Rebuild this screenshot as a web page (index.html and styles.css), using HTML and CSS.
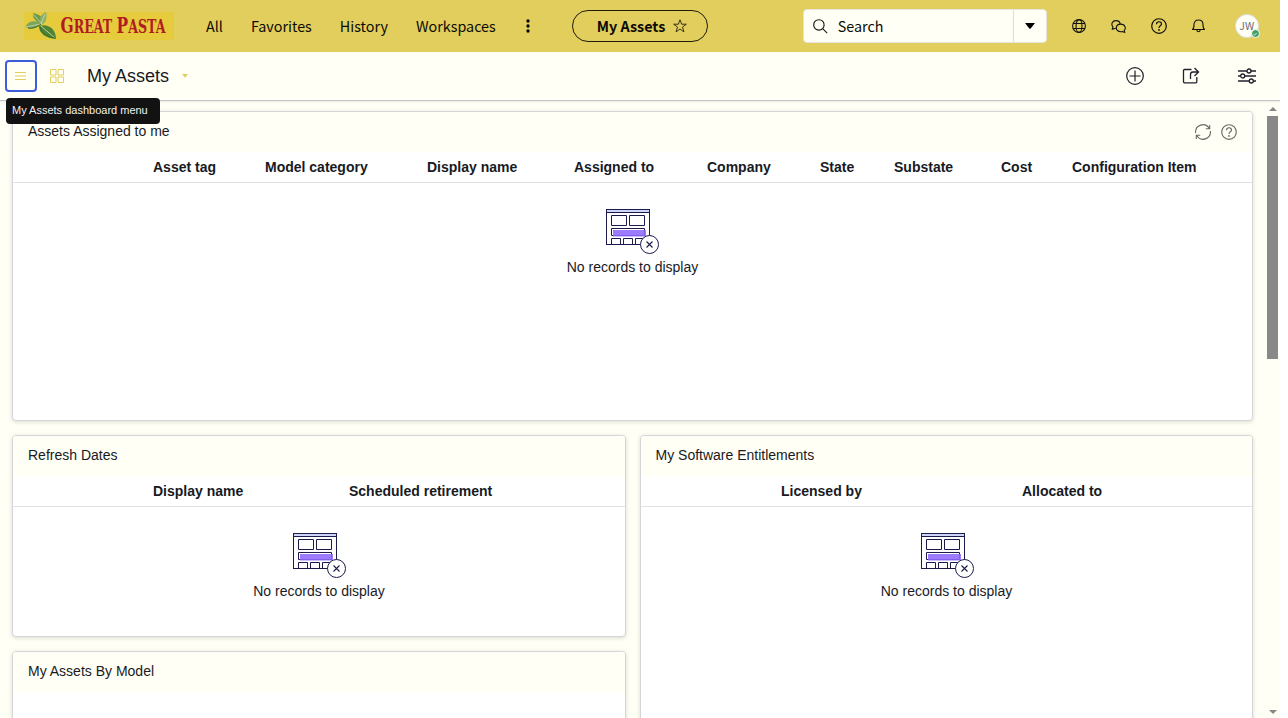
FILE: index.html
```
<!DOCTYPE html>
<html lang="en">
<head>
<meta charset="utf-8">
<title>My Assets</title>
<link rel="stylesheet" href="styles.css">
</head>
<body>
<svg class="defs" width="0" height="0">
  <symbol id="empty" viewBox="0 0 53 45">
    <rect x=".5" y=".5" width="43" height="35" fill="#fff" stroke="#1b1b4b"/>
    <rect x="1" y="1" width="42" height="2" fill="#cfd5f7"/>
    <path d="M0 3.5h44M5.5 6.500h15v10h-15zM23.500 6.500h15v10h-15z" fill="none" stroke="#1b1b4b"/>
    <path d="M5.500 19.500h33v7h-33zM5.500 35v-5.500h9V35M17.500 35v-5.500h9V35M29.500 35v-5.500h9V35" fill="none" stroke="#1b1b4b"/>
    <rect x="7" y="21" width="33" height="6.500" fill="#8f69ff" fill-opacity=".88"/>
    <circle cx="43.500" cy="35.500" r="9" fill="#fff" stroke="#1b1b4b"/>
    <path d="M40.500 32.500l6 6m0-6l-6 6" stroke="#1b1b4b" stroke-width="1.100"/>
  </symbol>
  <symbol id="help" viewBox="0 0 16 16">
    <g fill="none" stroke="currentColor" stroke-width="1.150"><circle cx="8" cy="8" r="7.300"/><path d="M5.500 6.300C5.500 2.900 10.500 2.900 10.500 6.100 10.500 7.900 8 7.800 8 9.900"/></g>
    <circle cx="8" cy="11.900" r=".9" fill="currentColor"/>
  </symbol>
</svg>
<div class="app">
  <header class="topbar">
    <svg class="logo" width="150" height="28" viewBox="0 0 150 28">
      <rect width="150" height="28" fill="#e6cb3c"/>
      <path d="M18 12C13 10 8 7 9 1c6 1 10 4 11 9z" fill="#6f9b50"/>
      <path d="M18 12C12 17 6 17 1 15c4-7 11-7 17-3z" fill="#7ba35c"/>
      <path d="M17 12c-2-6 0-10 5-12 1 4 1 9-3 12z" fill="#8db16a"/>
      <path d="M15 14c8-3 17 2 17 13-10-1-17-5-17-13z" fill="#4f8436"/>
      <path d="M9 2l9 10M1 15l16-3 4-10M17 14l14 12" fill="none" stroke="#c3d5a2" stroke-width=".9"/>
      <path d="M4 16c5 1 9-1 13-4M16 15c1 6 8 10 15 11" fill="none" stroke="#35692a"/>
      <text class="logo-text" transform="translate(36.500 21) scale(.78 1)"><tspan class="cap">G</tspan>REAT <tspan class="cap">P</tspan>ASTA</text>
    </svg>
    <nav class="nav"><a>All</a><a>Favorites</a><a>History</a><a>Workspaces</a></nav>
    <svg class="more" width="4" height="14" viewBox="0 0 4 14"><circle cx="2" cy="2" r="1.650"/><circle cx="2" cy="7" r="1.650"/><circle cx="2" cy="12" r="1.650"/></svg>
    <div class="context">My Assets
      <svg width="14" height="14" viewBox="0 0 14 14" fill="none" stroke="#28240f" stroke-width=".9"><path d="M7 .8l1.600 4.400h4.700L9.500 8l1.400 4.800L7 10l-3.900 2.800L4.500 8 .7 5.200h4.700z"/></svg>
    </div>
    <div class="search">
      <svg width="15" height="15" viewBox="0 0 15 15" fill="none" stroke="#111" stroke-width="1.100"><circle cx="5.900" cy="5.900" r="5.200"/><path d="M9.700 9.700l4.500 4.500"/></svg>
      <span class="search-text">Search</span>
      <span class="search-drop"><svg width="10" height="6" viewBox="0 0 10 6"><path d="M0 0h10L5.700 5.400q-.7.700-1.400 0z"/></svg></span>
    </div>
    <div class="tools">
      <svg width="14" height="14" viewBox="0 0 14 14" fill="none" stroke="#111" stroke-width="1.100"><circle cx="7" cy="7" r="6.400"/><ellipse cx="7" cy="7" rx="3" ry="6.400"/><path d="M1 4.500h12M1 9.500h12"/></svg>
      <svg width="15" height="13" viewBox="0 0 15 13" fill="none" stroke="#111" stroke-width="1.100"><path d="M4.800 8.300L1.300 9.300l.7-2.500C-.5 4 1.500.6 4.800.6c2.600 0 4.300 1.600 4.300 3.500"/><path d="M9.500 4.100c5-.1 5.700 4.800 3.700 6.100l.5 2.200-2.400-.9C7.500 12.400 5 10 5.300 7.600 5.600 5.500 7.400 4.200 9.500 4.100z"/></svg>
      <svg width="16" height="16"><use href="#help"/></svg>
      <svg width="13" height="14" viewBox="0 0 13 14" fill="none" stroke="#111" stroke-width="1.100"><path d="M.6 10.500C2 9.500 2 8 2 5.500 2 2.500 4 1 6.500 1S11 2.500 11 5.500c0 2.500 0 4 1.400 5zM4.800 10.800c0 2.500 3.400 2.500 3.400 0"/></svg>
      <div class="avatar">JW<span class="presence"><svg width="6" height="6" viewBox="0 0 6 6"><path d="M1.300 3l1.200 1.200L4.700 2" fill="none" stroke="#fff" stroke-width=".8"/></svg></span></div>
    </div>
  </header>
  <div class="toolbar">
    <div class="menu-button">
      <svg width="11" height="8" viewBox="0 0 11 8" stroke="#e2ce5c"><path d="M0 .5h11M0 4h11M0 7.500h11"/></svg>
      <div class="tooltip">My Assets dashboard menu</div>
    </div>
    <svg class="grid-icon" width="14" height="14" viewBox="0 0 14 14" fill="none" stroke="#e2ce5c"><path d="M.5.500h5.500v5.500h-5.500zM8 .5h5.500v5.500h-5.500zM.5 8h5.500v5.500h-5.500zM8 8h5.500v5.500h-5.500z"/></svg>
    <h1>My Assets</h1>
    <svg class="caret" width="6" height="4" viewBox="0 0 6 4"><path d="M0 0h6L3 3.700z" fill="#e2ce5c"/></svg>
    <div class="actions">
      <svg width="18" height="18" viewBox="0 0 18 18" fill="none" stroke="#20212b" stroke-width="1.200"><circle cx="9" cy="9" r="8.300"/><path d="M9 3.500v11M3.500 9h11"/></svg>
      <svg width="18" height="18" viewBox="0 0 18 18" fill="none" stroke="#20212b" stroke-width="1.300"><path d="M9.500 2.500h-7Q1.500 2.500 1.500 3.500v11.300q0 1 1 1h11.300q1 0 1-1V10"/><path d="M8.500 12V7.500Q8.500 5 11 5h5.500M12.500 1l4 4-4 4"/></svg>
      <svg width="18" height="16" viewBox="0 0 18 16" fill="none" stroke="#20212b" stroke-width="1.300"><path d="M0 3h9m4 0h5M0 8h2.700m4 0H18M0 13h11.300m4 0H18"/><circle cx="11" cy="3" r="2"/><circle cx="4.700" cy="8" r="2"/><circle cx="13.300" cy="13" r="2"/></svg>
    </div>
  </div>
  <div class="content">
    <main class="board">
      <section class="card assigned">
        <div class="card-title">Assets Assigned to me
          <div class="card-tools">
            <svg width="16" height="16" viewBox="0 0 16 16" fill="none" stroke="#686868" stroke-width="1.100"><path d="M.6 9C-.1 1 10-2.500 14.300 4.500M10.800 4.700h3.900V1M15.400 7c.700 8-9.400 11.500-13.700 4.500M5.200 11.300H1.300V15"/></svg>
            <svg width="16" height="16"><use href="#help"/></svg>
          </div>
        </div>
        <div class="columns"><b>Asset tag</b><b>Model category</b><b>Display name</b><b>Assigned to</b><b>Company</b><b>State</b><b>Substate</b><b>Cost</b><b>Configuration Item</b></div>
        <div class="empty"><svg width="53" height="45"><use href="#empty"/></svg><span>No records to display</span></div>
      </section>
      <div class="stack">
        <section class="card refresh">
          <div class="card-title">Refresh Dates</div>
          <div class="columns"><b>Display name</b><b>Scheduled retirement</b></div>
          <div class="empty"><svg width="53" height="45"><use href="#empty"/></svg><span>No records to display</span></div>
        </section>
        <section class="card models"><div class="card-title">My Assets By Model</div></section>
      </div>
      <section class="card software">
        <div class="card-title">My Software Entitlements</div>
        <div class="columns"><b>Licensed by</b><b>Allocated to</b></div>
        <div class="empty"><svg width="53" height="45"><use href="#empty"/></svg><span>No records to display</span></div>
      </section>
    </main>
    <div class="scrollbar">
      <svg width="8" height="4" viewBox="0 0 8 4"><path d="M0 4L4 0l4 4z" fill="#868686"/></svg>
      <div class="thumb"></div>
      <svg class="down" width="8" height="4" viewBox="0 0 8 4"><path d="M0 0l4 4 4-4z" fill="#868686"/></svg>
    </div>
  </div>
</div>
</body>
</html>
```
FILE: styles.css
```
* { box-sizing: border-box; }
body { margin: 0; background: #fff; color: #181a1f; font: 14px/20px "Liberation Sans", Arial, sans-serif; overflow: hidden; }
svg { display: block; flex: none; }
.defs { position: absolute; }
.app { width: 1280px; height: 718px; display: flex; flex-direction: column; background: #fffff6; overflow: hidden; }

.topbar { height: 52px; flex: none; display: flex; align-items: center; background: #e2ce5c; color: #0b0b06; padding-left: 24px; font: 14.35px/24px "Noto Sans CJK SC", "Noto Sans", sans-serif; }
.logo-text { fill: #b01c20; font: bold 18px "DejaVu Serif Condensed", "DejaVu Serif", serif; }
.logo-text .cap { font-size: 22px; }
.nav { display: flex; gap: 28px; margin-left: 32px; }
.more { margin-left: 30px; }
.context { width: 136px; height: 32px; margin-left: 42px; padding-left: 24px; border: 1px solid #1f1c0c; border-radius: 16px; display: flex; flex: none; align-items: center; gap: 8px; font-weight: 700; white-space: nowrap; }
.search { width: 244px; height: 34px; flex: none; margin-left: 95px; padding-left: 9px; display: flex; align-items: center; background: #fffff6; border: 1px solid #e4e3dc; border-radius: 4px; }
.search-text { margin-left: 10px; }
.search-drop { width: 33px; height: 32px; margin-left: auto; border-left: 1px solid #deded8; display: flex; align-items: center; justify-content: center; }
.tools { display: flex; align-items: center; margin-left: 25px; }
.tools svg + svg { margin-left: 25px; }
.avatar { position: relative; width: 24px; height: 24px; flex: none; margin-left: 30px; border: 1px solid #dcdde0; border-radius: 50%; background: #fffff6; color: #676b7c; font: 10.500px/21px "Noto Sans CJK SC", sans-serif; text-align: center; }
.presence { position: absolute; right: -2px; bottom: -1px; width: 9px; height: 9px; border: 1px solid #fffff6; border-radius: 50%; background: #3f9f68; display: flex; align-items: center; justify-content: center; }

.toolbar { height: 49px; flex: none; display: flex; align-items: center; padding-left: 5px; border-bottom: 1px solid #bfc2ca; box-shadow: 0 1px 2px rgba(0,0,0,.08); }
.menu-button { position: relative; width: 32px; height: 32px; padding-right: 1px; border: 2px solid #3d5ddd; border-radius: 4px; display: flex; align-items: center; justify-content: center; }
.tooltip { position: absolute; z-index: 2; left: -1px; top: 36px; width: 154px; height: 26px; padding-left: 6px; border-radius: 4px; background: #121212; color: #f3f3f3; font-size: 11px; line-height: 25px; white-space: nowrap; }
.grid-icon { margin-left: 13px; }
h1 { margin: 0 0 0 23px; font-size: 18px; font-weight: 400; line-height: 24px; }
.caret { margin-left: 13px; }
.actions { display: flex; align-items: center; gap: 38px; margin: 0 24px 0 auto; }

.content { flex: 1; min-height: 0; display: flex; }
.board { width: 1265px; padding: 10px 12px 0; display: grid; grid-template-columns: 614px 613px; grid-template-rows: 310px auto; gap: 14px; align-content: start; }
.card { border: 1px solid #d5d6da; border-radius: 4px; background: #fff; box-shadow: 0 1px 4px rgba(0,0,0,.15); overflow: hidden; }
.assigned { grid-column: 1 / 3; }
.stack { display: grid; grid-template-rows: 202px 300px; gap: 14px; }
.card-title { height: 40px; padding: 0 15px; background: #fffff6; line-height: 39px; display: flex; justify-content: space-between; }
.software .card-title { padding-left: 14.500px; }
.card-tools { display: flex; align-items: center; gap: 10px; color: #686868; }
.columns { height: 31px; padding-left: 140px; border-bottom: 1px solid #e2e2e4; display: grid; align-items: center; white-space: nowrap; }
.assigned .columns { grid-template-columns: 112px 162px 147px 133px 113px 74px 107px 71px auto; }
.refresh .columns { grid-template-columns: 196px auto; }
.software .columns { grid-template-columns: 241px auto; }
.empty { padding-top: 26px; display: flex; flex-direction: column; align-items: center; gap: 3px; }
.software .empty svg { margin-left: 2px; }

.scrollbar { width: 15px; padding: 6px 0 4px; display: flex; flex-direction: column; align-items: center; }
.thumb { width: 11px; height: 243px; margin-top: 5px; background: #888; }
.down { margin-top: auto; }
```
